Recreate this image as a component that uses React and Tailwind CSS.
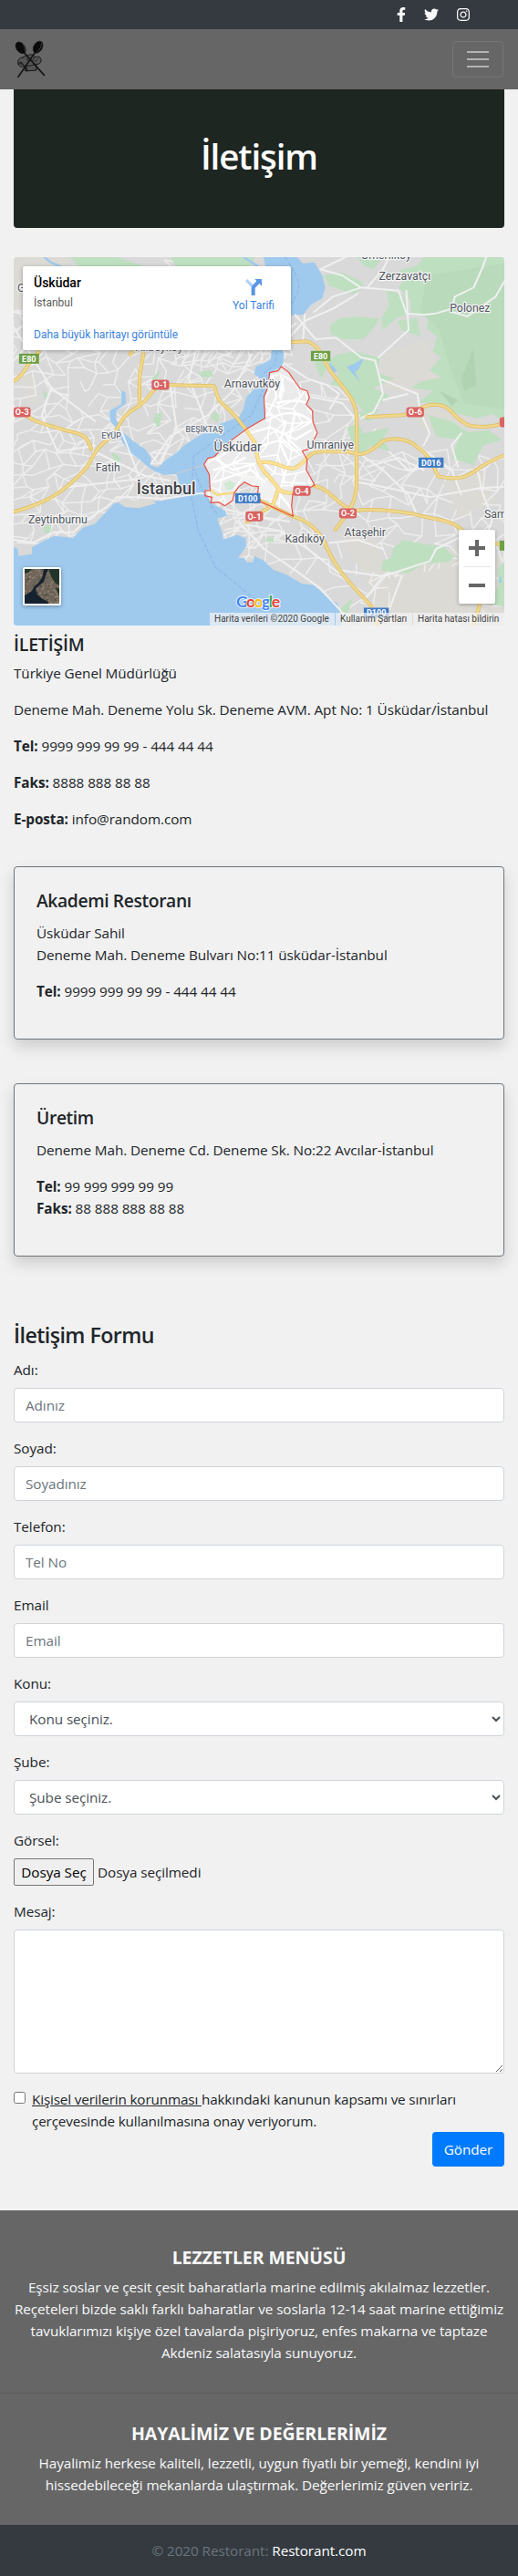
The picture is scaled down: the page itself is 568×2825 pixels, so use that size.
import { FaFacebookF, FaTwitter, FaInstagram } from "react-icons/fa";

/* ---------- map data ---------- */

function rng(seed) {
  let s = seed;
  return () => {
    s = (s * 16807) % 2147483647;
    return s / 2147483647;
  };
}

// Irregular street mesh: a jittered lattice with some of its edges left out.
function streets(seed, x0, y0, x1, y1, cell, keep) {
  const r = rng(seed);
  const cols = Math.ceil((x1 - x0) / cell) + 1;
  const rows = Math.ceil((y1 - y0) / cell) + 1;
  const pts = [];
  for (let j = 0; j < rows; j++) {
    pts.push([]);
    for (let i = 0; i < cols; i++) {
      pts[j].push([
        Math.round(x0 + i * cell + (j % 2) * cell * 0.5 + (r() - 0.5) * cell * 0.85),
        Math.round(y0 + j * cell + (r() - 0.5) * cell * 0.85),
      ]);
    }
  }
  let d = "";
  const edge = (a, b) => {
    d += `M${a[0]} ${a[1]}L${b[0]} ${b[1]}`;
  };
  for (let j = 0; j < rows; j++)
    for (let i = 0; i < cols; i++) {
      if (i + 1 < cols && r() < keep) edge(pts[j][i], pts[j][i + 1]);
      if (j + 1 < rows && r() < keep) edge(pts[j][i], pts[j + 1][i]);
      if (i > 0 && j + 1 < rows && r() < 0.22) edge(pts[j][i], pts[j + 1][i - 1]);
    }
  return d;
}

const WEST = streets(11, -20, 190, 830, 930, 38, 0.68);
const SOUTH = streets(29, 640, 650, 1600, 1230, 50, 0.64);
const CENTER = streets(5, 860, 420, 1090, 700, 44, 0.56);
const NORTH = streets(47, 500, 20, 840, 330, 42, 0.6);
const INNER = streets(83, 620, 400, 980, 850, 44, 0.72);

const WATER =
  "M800 0L905 0L925 22L960 18L985 60L995 100L985 135L950 155L925 188L885 190L870 250L860 306L862 340L855 360L818 380L815 420L803 455L803 530L745 565L695 603L640 656L620 662L608 682L628 715L628 755L612 770L625 800L640 815L675 835L680 850L650 860L665 905L670 930L715 915L740 925L743 950L730 970L715 990L735 990L745 1005L765 1005L770 985L800 1000L830 1030L870 1045L920 1075L960 1080L1000 1118L1035 1140L1048 1212L0 1212L0 955L12 960L15 985L60 978L60 955L95 935L130 918L190 925L220 892L260 878L290 845L320 812L335 808L350 820L385 822L400 800L470 803L535 790L540 770L528 735L520 713L480 715L452 704L425 685L400 662L370 640L345 602L335 570L310 540L308 505L345 485L345 440L356 445L358 482L328 503L325 530L350 578L385 608L420 633L438 660L436 684L460 694L490 665L520 645L545 620L590 590L660 550L722 525L735 500L745 460L775 430L790 400L770 385L775 360L822 340L825 306L840 200Z";

const BOROUGH =
  "M855 360L880 380L898 408L915 432L938 440L945 462L935 485L955 505L956 540L970 578L960 600L955 628L922 638L938 665L935 700L962 750L925 770L892 778L888 820L893 853L790 805L780 780L782 755L762 753L738 740L720 755L705 775L700 800L675 818L655 806L630 808L634 790L612 785L612 768L628 768L625 715L608 682L620 662L640 657L695 603L745 565L803 530L800 458L812 430L818 380L845 374Z";

const GREENS = [
  "M1310 0L1568 0L1568 545L1530 515L1480 530L1420 515L1340 480L1290 480L1340 440L1270 430L1300 410L1370 395L1330 375L1365 330L1340 310L1352 262L1320 235L1325 200L1270 187L1268 140L1230 100L1250 70L1230 45L1290 28Z",
  "M1190 105L1245 125L1268 185L1225 200L1180 240L1175 200L1200 160Z",
  "M990 60L1050 50L1112 80L1120 100L1085 122L1010 95Z",
  "M1010 225L1040 202L1100 195L1170 203L1150 235L1118 270L1050 270L1015 255Z",
  "M1100 0L1180 0L1150 40L1120 30Z",
  "M1225 210L1290 200L1300 260L1240 240Z",
  "M1035 320L1090 310L1170 330L1165 380L1215 400L1150 430L1200 455L1130 520L1095 480L1050 430L1010 420L1040 380L1000 345Z",
  "M960 320L1000 360L985 400L965 360Z",
  "M1065 560L1100 545L1120 580L1200 560L1180 600L1205 640L1140 620L1110 660L1085 620Z",
  "M1105 510L1170 500L1140 540L1108 530Z",
  "M1325 520L1400 540L1450 575L1520 570L1560 600L1500 620L1470 685L1400 662L1420 600L1350 590Z",
  "M1175 1030L1180 1000L1205 990L1215 955L1245 930L1300 942L1370 950L1410 985L1390 1002L1310 1010L1260 1040L1200 1035Z",
  "M1568 1000L1545 1030L1550 1080L1520 1140L1568 1150Z",
  "M1040 1160L1085 1120L1070 1165L1050 1190Z",
  "M180 0L330 0L420 30L210 30Z",
  "M500 0L770 0L760 30L520 30Z",
  "M590 378L630 372L640 392L600 396Z",
  "M90 440L105 445L112 470L98 462Z",
  "M705 530L725 560L700 590L695 560Z",
  "M455 515L475 510L465 560L445 540Z",
  "M440 400L470 370L455 410Z",
  "M95 885L120 880L118 905L98 908Z",
  "M310 640L330 650L345 665L325 680Z",
  "M805 925L830 922L832 938L808 936Z",
  "M640 505L660 520L650 545L632 530Z",
];

const TRUNKS = [
  "M0 408C30 395 38 355 80 312",
  "M0 838C80 815 150 790 235 690C260 640 270 620 320 585C340 550 340 525 400 490C430 470 440 440 465 420L640 424C650 440 645 460 665 480C700 510 740 560 770 610C780 650 775 670 800 705C830 735 835 750 855 770C880 780 895 775 900 775",
  "M415 310C412 350 400 380 402 420L402 478",
  "M372 320L385 306",
  "M0 510L30 512C60 545 110 550 165 570C215 580 235 585 248 632",
  "M885 280L935 277C985 290 985 340 1020 385C1060 440 1095 470 1096 530L1096 740C1095 800 1080 830 1028 896",
  "M1130 526L1240 520C1280 515 1310 480 1355 486C1400 488 1410 540 1460 555C1500 562 1530 560 1568 545",
  "M790 675C850 670 860 700 895 695C930 685 940 635 985 640L1070 640C1110 655 1130 650 1180 605C1215 590 1265 600 1290 625C1330 650 1340 690 1358 722C1420 735 1450 725 1490 692C1530 665 1550 660 1568 652",
  "M960 752C1010 760 1040 820 1085 835C1150 825 1210 835 1280 845C1340 865 1390 860 1430 895",
  "M845 768L828 815L745 872",
  "M790 802L893 853C950 870 975 905 990 930C1020 1010 1060 1060 1145 1150L1165 1212",
  "M1435 900C1500 930 1530 940 1568 950",
  "M1490 1140L1470 1212",
];

const MINORS = [
  "M0 180L70 195L120 200M0 230L60 330L120 430L260 540",
  "M120 430L90 520L140 640L260 620",
  "M900 190L965 270L1030 265L1110 330L1155 340L1170 400L1290 450L1300 510L1330 580L1310 620",
  "M960 180L1020 130L1110 100L1230 110L1255 185L1310 190L1350 185L1400 170",
  "M885 260L930 210L1020 170L1100 120M925 270L930 190M1110 100L1050 60L980 40L1060 0M1130 100L1180 40L1200 0",
  "M1255 110L1262 240L1165 330M1400 170L1410 130L1470 100L1500 30L1510 0M1400 180L1450 195L1540 130L1568 80",
  "M865 350L940 400L1000 420L1040 450L1010 500M950 460L1050 480L1090 530",
  "M1170 400L1180 450L1150 510L1110 530M1180 470L1260 450",
  "M1110 650L1180 700L1260 780L1290 850M1200 640L1260 700L1320 690M1290 620L1400 700L1430 780M1130 690L1230 660L1310 700",
  "M1100 740L1200 760L1330 790L1490 760L1568 755M1480 690L1500 780L1530 860L1490 1000M1430 580L1400 620L1420 690",
  "M720 870L800 960L900 1030L980 1090L1060 1180M740 880L850 900L940 960L1040 1040M680 830L760 850L880 870",
  "M1010 940L1100 930L1180 960M1040 1030L1180 1050L1330 1000L1350 960L1430 920M1180 1050L1120 1130M1240 1050L1200 1160L1160 1212",
  "M0 930L60 940L130 905L190 905L240 860L300 820L330 790L390 790L480 795L590 778L625 776",
  "M150 760L400 730M260 640L420 720L500 735M340 560L400 720M590 275L560 400L620 560",
  "M440 680L500 590L620 520L700 440L760 320M500 420L520 560L470 680",
];

const INNER_ROADS = [
  "M825 390L840 460L810 520M840 480C880 470 910 470 940 480M810 540C860 500 920 510 950 540M860 400L850 460",
  "M750 580L820 560L900 600L950 570M790 620L860 600L915 650M640 660L700 700L770 680M640 700L700 680L740 660",
  "M640 740L760 700L800 740M870 700L860 740L930 745M850 780L890 830M870 540L850 610L880 680M900 510L880 600L930 650",
];

const MAP_LABELS = [
  { t: "Arnavutköy", x: 762, y: 430, s: 12.3 },
  { t: "Üsküdar", x: 716, y: 640, s: 14.3 },
  { t: "Umraniye", x: 1012, y: 631, s: 12.3 },
  { t: "Fatih", x: 301, y: 706, s: 12.3 },
  { t: "Zeytinburnu", x: 141, y: 877, s: 12.3 },
  { t: "Kadıköy", x: 930, y: 940, s: 12.3 },
  { t: "Ataşehir", x: 1123, y: 919, s: 12.3 },
  { t: "Zerzavatçı", x: 1250, y: 76, s: 12.3 },
  { t: "Polonez", x: 1458, y: 181, s: 12.3 },
  { t: "Sam", x: 1540, y: 859, s: 12.3 },
  { t: "Ömerliköy", x: 1190, y: 5, s: 12.3 },
  { t: "Alibeyköy", x: 465, y: 308, s: 12.3 },
  { t: "G", x: 24, y: 114, s: 12.3 },
];

const SHIELDS = [
  { t: "E80", x: 49, y: 334, w: 64, c: "#6ea044" },
  { t: "E80", x: 981, y: 325, w: 62, c: "#6ea044" },
  { t: "D", x: 1580, y: 949, w: 54, c: "#6ea044" },
  { t: "O-1", x: 469, y: 420, w: 56, c: "#d96363", r: 3 },
  { t: "O-3", x: 27, y: 510, w: 54, c: "#d96363", r: 3 },
  { t: "O-6", x: 1283, y: 510, w: 56, c: "#d96363", r: 3 },
  { t: "O-4", x: 921, y: 769, w: 56, c: "#d96363", r: 3 },
  { t: "O-2", x: 1068, y: 843, w: 56, c: "#d96363", r: 3 },
  { t: "O-1", x: 769, y: 853, w: 56, c: "#d96363", r: 3 },
  { t: "O", x: 1580, y: 543, w: 54, c: "#d96363", r: 3 },
  { t: "D016", x: 1334, y: 676, w: 80, c: "#3d7bc6" },
  { t: "D100", x: 748, y: 793, w: 80, c: "#3d7bc6" },
  { t: "D100", x: 1159, y: 1170, w: 80, c: "#3d7bc6" },
];

const KX = 538 / 1568;
const KY = 1 / 3;

function MapDrawing() {
  return (
    <svg className="block h-full w-full" viewBox="0 0 538 404" fontFamily="Roboto, sans-serif">
      <defs>
        <clipPath id="borough">
          <path d={BOROUGH} />
        </clipPath>
      </defs>
      <g transform={`scale(${KX} ${KY})`} fill="none" strokeLinejoin="round" strokeLinecap="round">
        <rect width="1568" height="1212" fill="#d9d9d9" />
        <path
          fill="#dbdad5"
          d="M0 0H180L80 180H0ZM1150 330L1320 270L1370 400L1290 450L1180 430ZM1120 1050L1480 930L1568 1000V1212H1180ZM1380 740L1500 700L1540 800L1420 860ZM20 400L70 380L85 480L40 470Z M1240 470L1500 540L1450 600L1300 560Z"
        />
        <g stroke="#ededed" strokeWidth="4.4">
          <path d={WEST} />
          <path d={CENTER} />
          <path d={NORTH} />
          <path d={SOUTH} />
        </g>
        <path fill="#dbdad5" d="M1190 1060L1440 1010L1500 1160L1230 1212Z M1370 740L1480 700L1500 830L1420 840Z M1040 930L1140 900L1200 1030L1120 1040Z" />
        {GREENS.map((d) => (
          <path key={d} d={d} fill="#bfdfc1" />
        ))}
        <path fill="#b9dabb" d="M1320 60L1568 20V500L1440 480L1400 380L1360 240L1300 180Z" />
        <path fill="#b0d3b2" d="M1470 300L1478 420L1440 440L1430 400Z M1360 440L1420 470L1400 490Z" />
        <path d={WATER} fill="#9fcaee" stroke="#9fcaee" strokeWidth="2" />
        <path fill="#dbdad5" d="M345 805L440 795L455 810L400 826L355 822Z" />
        <path fill="#9fcaee" d="M1010 345L1035 375L1012 385ZM1065 360L1090 350L1120 330L1105 365L1090 378L1108 410L1080 380ZM1556 1045L1560 1070L1550 1070Z" />
        <path d="M100 0C120 30 150 20 170 45M735 0L780 30" stroke="#9fcaee" strokeWidth="7" />
        {MINORS.map((d) => (
          <path key={d} d={d} stroke="#f0f0f0" strokeWidth="6" />
        ))}
        <path d={BOROUGH} fill="#ebebeb" />
        <g clipPath="url(#borough)">
          <path d={INNER} stroke="#fff" strokeWidth="4.5" />
          <path fill="#f3f3f1" d="M700 700L840 740L830 800L780 800L740 740Z" opacity=".7" />
          <path fill="#cfe8d2" d="M672 745L690 735L708 745L700 765L680 765Z" />
          {INNER_ROADS.map((d) => (
            <path key={d} d={d} stroke="#fff" strokeWidth="7" />
          ))}
        </g>
        <g stroke="#8db4e4" strokeWidth="3" strokeDasharray="12 8">
          <path d="M868 0C890 40 920 70 908 115C895 150 880 160 860 190M842 310L835 355L800 380L795 440L760 520L690 570L575 655L568 790L590 900L645 1020L770 1125" />
          <path d="M575 690C590 740 610 790 650 845" />
        </g>
        <path d="M520 712L605 684" stroke="#c9ccd2" strokeWidth="3" />
        {TRUNKS.map((d) => (
          <path key={d} d={d} stroke="#e0bb5d" strokeWidth="12" />
        ))}
        {TRUNKS.map((d) => (
          <path key={d} d={d} stroke="#efd88c" strokeWidth="8" />
        ))}
        <path d="M630 768L650 782L705 775" stroke="#f5dc8a" strokeWidth="8" />
        <g clipPath="url(#borough)">
          <path
            d="M740 560L770 610C780 650 775 670 800 705C830 735 835 750 855 770C880 780 895 775 900 775M845 768L828 815M790 675C850 670 860 700 895 695C930 685 935 650 955 640"
            stroke="#fde293"
            strokeWidth="9"
          />
        </g>
        <path d={BOROUGH} stroke="#ea4b42" strokeWidth="3.4" />
      </g>

      {SHIELDS.map((s) => (
        <g key={s.t + s.x}>
          <rect x={(s.x - s.w / 2) * KX} y={s.y * KY - 5.5} width={s.w * KX} height="11" rx={s.r || 0} fill={s.c} />
          <text x={s.x * KX} y={s.y * KY + 3.2} fontSize="9" fontWeight="700" fill="#fff" textAnchor="middle">
            {s.t}
          </text>
        </g>
      ))}

      <g textAnchor="middle" stroke="#f4f4f4" strokeWidth="2.4" strokeLinejoin="round" paintOrder="stroke" fill="#50555e">
        {MAP_LABELS.map((l) => (
          <text key={l.t} x={l.x * KX} y={l.y * KY} fontSize={l.s}>
            {l.t}
          </text>
        ))}
        <text x={487 * KX} y={780 * KY} fontSize="18" fontWeight="500" fill="#3f4248">
          İstanbul
        </text>
        <text x={609 * KX} y={575 * KY} fontSize="9" fontWeight="500" fill="#687282">
          BEŞİKTAŞ
        </text>
        <text x={312 * KX} y={597 * KY} fontSize="9" fontWeight="500" fill="#687282">
          EYÜP
        </text>
      </g>
    </svg>
  );
}

function SatelliteThumb() {
  const r = rng(7);
  const dots = Array.from({ length: 150 }, () => [r() * 38, r() * 38, r()]);
  return (
    <svg className="block h-full w-full" viewBox="0 0 38 38">
      <rect width="38" height="38" fill="#6f655a" />
      {dots.map(([x, y, k], i) => (
        <rect
          key={i}
          x={x}
          y={y}
          width="2"
          height="1.5"
          fill={k < 0.3 ? "#8d7c6c" : k < 0.6 ? "#5c5a4a" : k < 0.8 ? "#9a8776" : "#4b4c3e"}
        />
      ))}
      <path fill="#22352a" d="M26 0H38V18L33 15L29 8ZM0 0H8L4 4L0 5ZM34 20L38 22V30Z" />
      <path fill="#16222f" d="M21 0H26L23 7L21 14L15 19L12 22L14 28L20 33L26 36V38H0V29L8 24L10 20L17 13L20 7Z" />
    </svg>
  );
}

function MapPanel() {
  return (
    <div className="relative h-[404px] overflow-hidden rounded font-['Roboto',sans-serif] tracking-normal">
      <MapDrawing />

      <div className="absolute top-[10px] left-[10px] flex h-[92px] w-[294px] justify-between rounded-[2px] bg-white pt-[9px] pr-[18px] pb-[9px] pl-3 shadow-[0_1px_4px_rgba(0,0,0,0.3)]">
        <div className="flex flex-col">
          <div className="text-sm leading-[18px] font-medium text-black">Üsküdar</div>
          <div className="mt-[5px] text-xs leading-4 text-[#5b5b5b]">İstanbul</div>
          <div className="mt-[19px] text-xs leading-4 text-[#3c82dd]">Daha büyük haritayı görüntüle</div>
        </div>
        <div className="flex flex-col items-center pt-[5px]">
          <svg width="18" height="18" viewBox="0 0 18 18">
            <path fill="#b3d0f5" d="M0 2.2L2.2 0L8.8 6.6L7 9.4Z" />
            <path
              fill="#5a97e4"
              d="M10.3 0H18V7.7L15.4 5.1L11.4 9.1Q10.7 9.8 10.7 10.8V18H6.6V10.4Q6.6 8 8.2 6.4L12.4 2.2Z"
            />
          </svg>
          <div className="mt-[3px] text-xs leading-4 text-[#3c82dd]">Yol Tarifi</div>
        </div>
      </div>

      <div className="absolute top-[340px] left-[10px] h-[42px] w-[42px] rounded-[2px] border-2 border-white shadow-[0_1px_4px_rgba(0,0,0,0.35)]">
        <SatelliteThumb />
      </div>

      <div className="absolute top-[299px] left-[488px] flex h-[81px] w-10 flex-col items-center rounded-[2px] bg-white shadow-[0_1px_4px_rgba(0,0,0,0.3)]">
        <svg width="18" height="40" viewBox="0 0 18 40">
          <path fill="#666" d="M7 11H11V18H18V22H11V29H7V22H0V18H7Z" />
        </svg>
        <div className="h-px w-[30px] bg-[#e6e6e6]" />
        <svg width="18" height="40" viewBox="0 0 18 40">
          <path fill="#666" d="M0 18H18V22H0Z" />
        </svg>
      </div>

      <svg className="absolute top-[366px] left-[240px]" width="58" height="24" viewBox="0 0 58 24">
        <text
          x="4"
          y="17.5"
          fontFamily="Lato, sans-serif"
          fontSize="17.5"
          fontWeight="700"
          textLength="48"
          stroke="#fff"
          strokeWidth="2"
          strokeOpacity=".8"
          paintOrder="stroke"
        >
          <tspan fill="#4285f4">G</tspan>
          <tspan fill="#ea4335">o</tspan>
          <tspan fill="#fbbc04">o</tspan>
          <tspan fill="#4285f4">g</tspan>
          <tspan fill="#34a853">l</tspan>
          <tspan fill="#ea4335">e</tspan>
        </text>
      </svg>

      <div className="absolute right-0 bottom-0 flex h-[14px] gap-px text-[10px] leading-[14px] whitespace-nowrap text-[#444]">
        <span className="w-[137px] bg-[#f5f5f5]/70 pl-[5px]">Harita verileri ©2020 Google</span>
        <span className="w-[84px] bg-[#f5f5f5]/70 pl-[5px]">Kullanım Şartları</span>
        <span className="w-[100px] bg-[#f5f5f5]/70 pl-[5px]">Harita hatası bildirin</span>
      </div>
    </div>
  );
}

/* ---------- page parts ---------- */

function Logo() {
  return (
    <svg width="34" height="42" viewBox="45 41 102 126" fill="none" stroke="#151515" strokeLinecap="round">
      <path
        d="M72 98C58 98 52 112 58 122C62 130 72 130 78 126L82 143L117 140L116 120C130 122 136 108 130 100C126 94 118 95 114 98C108 88 96 86 88 92C82 92 76 94 72 98Z"
        fill="#555"
        strokeWidth="3"
      />
      <path d="M58 120C60 108 72 112 76 128L80 142L88 141L82 124" fill="#2b2b2b" strokeWidth="2" />
      <path d="M80 127L116 122M84 100L92 112M110 98L104 110M120 104L112 112" strokeWidth="2.5" />
      <path d="M76 82L142 156" strokeWidth="5" />
      <path d="M112 82L57 162" strokeWidth="5" />
      <ellipse cx="65" cy="66" rx="14" ry="21" transform="rotate(-35 65 66)" fill="#0a0a0a" strokeWidth="2" />
      <ellipse cx="122" cy="64" rx="14" ry="21" transform="rotate(30 122 64)" fill="#0a0a0a" strokeWidth="2" />
      <path d="M72 52Q80 62 79 76M134 52Q134 66 122 78" stroke="#555" strokeWidth="2" />
    </svg>
  );
}

function Card({ title, children }) {
  return (
    <div className="h-[190px] rounded border border-[#6c757d] p-6 shadow-[0_8px_16px_rgba(0,0,0,0.15)]">
      <h5 className="mb-3 pt-[2px] text-[19.3px] leading-[22px] font-semibold tracking-[-0.38px]">{title}</h5>
      {children}
    </div>
  );
}

function Field({ label, children }) {
  return (
    <div className="mb-4">
      <label className="mb-2 block">{label}</label>
      {children}
    </div>
  );
}

function TextInput({ placeholder }) {
  return (
    <input
      className="block h-[38px] w-full rounded border border-[#ced4da] bg-white px-3 text-[#495057] placeholder:text-[#6c757d]"
      placeholder={placeholder}
    />
  );
}

function Select({ option }) {
  return (
    <select className="block h-[38px] w-full rounded border border-[#ced4da] bg-white px-3 text-[#495057]">
      <option>{option}</option>
    </select>
  );
}

export default function App() {
  return (
    <div className="flex min-h-[2825px] flex-col bg-[#f1f1f1] font-['Open_Sans',sans-serif] text-[15.3px] leading-6 tracking-[-0.08px] text-[#212529]">
      <div className="flex h-8 items-center justify-end gap-5 bg-[#343a40] pr-[53px] text-base text-[#f8f9fa]">
        <FaFacebookF className="h-4 w-[10px]" />
        <FaTwitter className="h-4 w-4" />
        <FaInstagram className="h-4 w-[14px]" />
      </div>
      <nav className="flex h-[66px] items-center justify-between bg-[#666] px-4">
        <Logo />
        <button className="flex h-10 w-14 items-center justify-center rounded border border-white/10">
          <svg width="30" height="30" viewBox="0 0 30 30" stroke="rgba(255,255,255,0.5)" strokeWidth="2" strokeLinecap="square">
            <path d="M4 7h22M4 15h22M4 23h22" />
          </svg>
        </button>
      </nav>

      <main className="flex flex-col px-[15px]">
        <div className="flex h-[152px] items-center justify-center rounded-b bg-[#1e2622] pb-[7px]">
          <h1 className="text-[38.5px] leading-[48px] font-semibold tracking-[-1.1px] text-white">İletişim</h1>
        </div>

        <div className="mt-8">
          <MapPanel />
        </div>

        <section className="mt-2">
          <h5 className="mb-2 pt-[2px] text-[19.5px] leading-[22px] font-semibold tracking-[-0.2px]">İLETİŞİM</h5>
          <div className="flex flex-col gap-4">
            <p>Türkiye Genel Müdürlüğü</p>
            <p className="whitespace-nowrap">Deneme Mah. Deneme Yolu Sk. Deneme AVM. Apt No: 1 Üsküdar/İstanbul</p>
            <p>
              <b>Tel:</b> 9999 999 99 99 - 444 44 44
            </p>
            <p>
              <b>Faks:</b> 8888 888 88 88
            </p>
            <p>
              <b>E-posta:</b> info@random.com
            </p>
          </div>
        </section>

        <div className="mt-10 flex flex-col gap-12">
          <Card title="Akademi Restoranı">
            <p className="mb-4">
              Üsküdar Sahil
              <br />
              Deneme Mah. Deneme Bulvarı No:11 üsküdar-İstanbul
            </p>
            <p>
              <b>Tel:</b> 9999 999 99 99 - 444 44 44
            </p>
          </Card>
          <Card title="Üretim">
            <p className="mb-4">Deneme Mah. Deneme Cd. Deneme Sk. No:22 Avcılar-İstanbul</p>
            <p>
              <b>Tel:</b> 99 999 999 99 99
              <br />
              <b>Faks:</b> 88 888 888 88 88
            </p>
          </Card>
        </div>

        <form className="mt-[71px]">
          <h4 className="mb-3 pt-[2px] text-[23.2px] leading-[27px] font-semibold tracking-[-0.56px]">İletişim Formu</h4>
          <Field label="Adı:">
            <TextInput placeholder="Adınız" />
          </Field>
          <Field label="Soyad:">
            <TextInput placeholder="Soyadınız" />
          </Field>
          <Field label="Telefon:">
            <TextInput placeholder="Tel No" />
          </Field>
          <Field label="Email">
            <TextInput placeholder="Email" />
          </Field>
          <Field label="Konu:">
            <Select option="Konu seçiniz." />
          </Field>
          <Field label="Şube:">
            <Select option="Şube seçiniz." />
          </Field>
          <Field label="Görsel:">
            <div className="flex h-[30px] items-center gap-1">
              <button
                type="button"
                className="h-[30px] w-[88px] rounded-[2px] border border-[#767676] bg-[#efefef] whitespace-nowrap text-black"
              >
                Dosya Seç
              </button>
              <span>Dosya seçilmedi</span>
            </div>
          </Field>
          <Field label="Mesaj:">
            <textarea className="block h-[158px] w-full resize rounded border border-[#ced4da] bg-white px-3 py-1.5" />
          </Field>
          <div className="flex items-start gap-[7px]">
            <input type="checkbox" className="mt-1 h-[13px] w-[13px] shrink-0" />
            <label className="tracking-[-0.16px]">
              <u>Kişisel verilerin korunması </u>hakkındaki kanunun kapsamı ve sınırları
              <br />
              çerçevesinde kullanılmasına onay veriyorum.
            </label>
          </div>
          <div className="flex justify-end">
            <button type="button" className="h-[38px] w-[79px] rounded bg-[#007bff] text-white">
              Gönder
            </button>
          </div>
        </form>
      </main>

      <footer className="mt-auto text-center text-[#f8f9fa]">
        <div className="h-[200px] bg-[#666] pt-10">
          <h5 className="mb-2 text-[19.5px] leading-6 font-bold">LEZZETLER MENÜSÜ</h5>
          <p className="whitespace-nowrap">
            Eşsiz soslar ve çesit çesit baharatlarla marine edilmiş akılalmaz lezzetler.
            <br />
            Reçeteleri bizde saklı farklı baharatlar ve soslarla 12-14 saat marine ettiğimiz
            <br />
            tavuklarımızı kişiye özel tavalarda pişiriyoruz, enfes makarna ve taptaze
            <br />
            Akdeniz salatasıyla sunuyoruz.
          </p>
        </div>
        <div className="h-[145px] border-t border-[#5c5c5c] bg-[#666] pt-8">
          <h5 className="mb-2 text-[19.5px] leading-6 font-bold">HAYALİMİZ VE DEĞERLERİMİZ</h5>
          <p className="whitespace-nowrap">
            Hayalimiz herkese kaliteli, lezzetli, uygun fiyatlı bir yemeği, kendini iyi
            <br />
            hissedebileceği mekanlarda ulaştırmak. Değerlerimiz güven veririz.
          </p>
        </div>
        <div className="bg-[#343a40] py-4 text-[#6c757d]">
          © 2020 Restorant: <span className="text-white">Restorant.com</span>
        </div>
      </footer>
    </div>
  );
}
